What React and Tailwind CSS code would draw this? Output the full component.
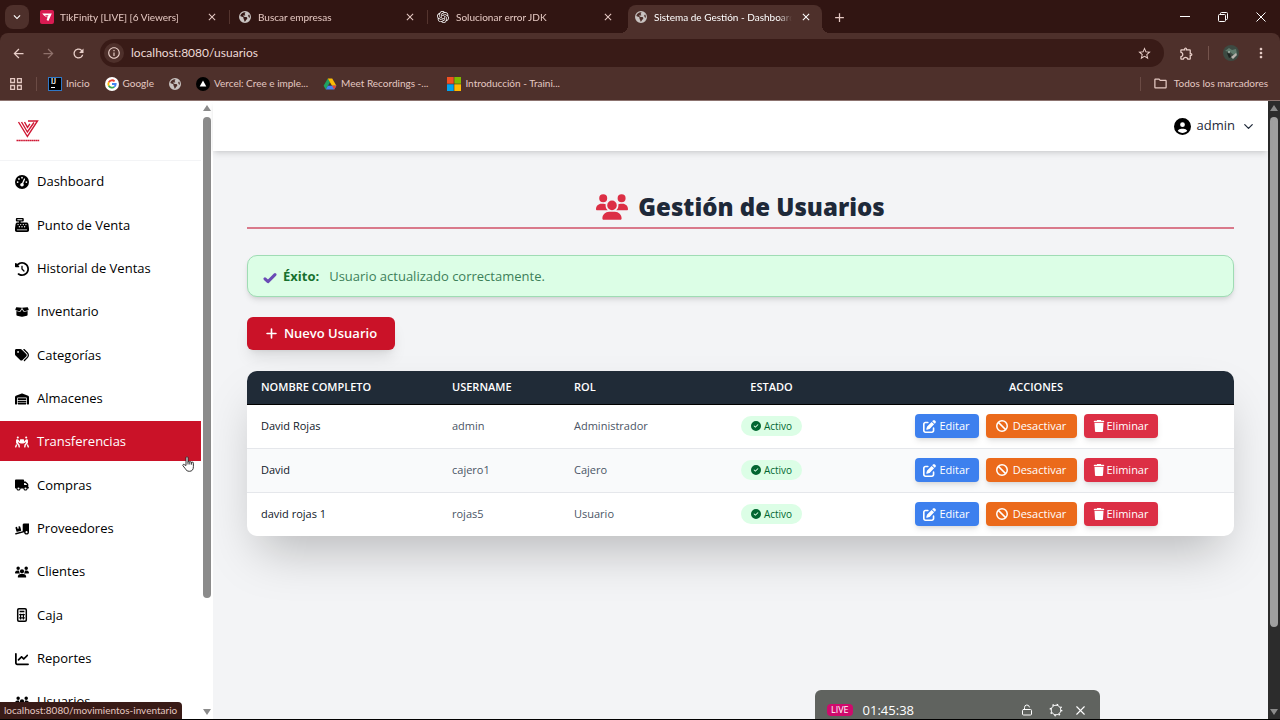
import React from 'react';
import {
    FaGaugeHigh, FaCashRegister, FaClockRotateLeft, FaBoxOpen, FaTags, FaWarehouse,
    FaPeopleCarryBox, FaTruck, FaTruckRampBox, FaUsers, FaChartLine, FaCircleUser,
    FaPenToSquare, FaBan, FaTrash, FaCircleCheck, FaPlus, FaEarthAmericas
} from 'react-icons/fa6';
import { SiOpenai } from 'react-icons/si';
import {
    MdArrowBack, MdArrowForward, MdRefresh, MdInfoOutline, MdStarBorder, MdOutlineExtension,
    MdMoreVert, MdOutlineFolder, MdClose, MdAdd, MdKeyboardArrowDown
} from 'react-icons/md';
import { ChevronDown, LockOpen, X } from 'lucide-react';

const CalculatorIcon = ({ className }) => (
    <svg viewBox="0 0 12 14" className={className} fill="none" stroke="currentColor">
        <rect x="1.7" y=".8" width="8.6" height="12.4" rx="1.2" strokeWidth="1.5" />
        <path d="M3.6 3.5h4.8" strokeWidth="1.6" />
        <path d="M3.2 6.7h5.6M3.2 9.9h5.6" strokeWidth="1.3" />
        <path d="M4.6 5.8v5.6M7.4 5.8v5.6" strokeWidth="1.2" />
    </svg>
);

const menu = [
    { label: 'Dashboard', icon: FaGaugeHigh },
    { label: 'Punto de Venta', icon: FaCashRegister },
    { label: 'Historial de Ventas', icon: FaClockRotateLeft },
    { label: 'Inventario', icon: FaBoxOpen },
    { label: 'Categorías', icon: FaTags },
    { label: 'Almacenes', icon: FaWarehouse },
    { label: 'Transferencias', icon: FaPeopleCarryBox, active: true },
    { label: 'Compras', icon: FaTruck },
    { label: 'Proveedores', icon: FaTruckRampBox },
    { label: 'Clientes', icon: FaUsers },
    { label: 'Caja', icon: CalculatorIcon },
    { label: 'Reportes', icon: FaChartLine },
    { label: 'Usuarios', icon: FaUsers },
];

const usuarios = [
    { nombre: 'David Rojas', username: 'admin', rol: 'Administrador' },
    { nombre: 'David', username: 'cajero1', rol: 'Cajero' },
    { nombre: 'david rojas 1', username: 'rojas5', rol: 'Usuario' },
];

const TikFinityIcon = () => (
    <svg viewBox="0 0 14 14" className="size-3.5 shrink-0">
        <rect width="14" height="14" rx="2" fill="#d81b52" />
        <path d="M2.2 3.6h9.6L8.4 11 6.6 10 7.6 7.4 5.4 6.6 4 5.4z" fill="#fff" />
        <path d="M5 5.2h3.6L7 7z" fill="#d81b52" />
    </svg>
);

const IdeaIcon = () => (
    <span className="flex size-3.5 flex-col border border-[#3178c6] bg-black pl-0.5 text-[7px] leading-[7px] font-bold text-white">
        IJ
        <span className="mt-0.5 h-px w-1 bg-white" />
    </span>
);

const GoogleIcon = () => (
    <svg viewBox="0 0 14 14" className="size-3.5">
        <circle cx="7" cy="7" r="7" fill="#fff" />
        <g fill="none" strokeWidth="1.8">
            <path d="M9.6 4.3A3.7 3.7 0 0 0 3.8 5.2" stroke="#ea4335" />
            <path d="M3.8 5.2a3.7 3.7 0 0 0 0 3.6" stroke="#fbbc05" />
            <path d="M3.8 8.8a3.7 3.7 0 0 0 5.5 1.1" stroke="#34a853" />
            <path d="M9.3 9.9A3.7 3.7 0 0 0 10.7 7H7" stroke="#4285f4" />
        </g>
    </svg>
);

const VercelIcon = () => (
    <svg viewBox="0 0 14 14" className="size-3.5">
        <circle cx="7" cy="7" r="7" fill="#000" />
        <path d="M7 3.6l3.3 5.8H3.7z" fill="#fff" />
    </svg>
);

const DriveIcon = () => (
    <svg viewBox="0 0 14 14" className="size-3.5">
        <path d="M4.8 1.5L.6 8.8l2.2 3.7L7 5.2z" fill="#1ea362" />
        <path d="M4.8 1.5h4.4l4.2 7.3H9z" fill="#fbbc04" />
        <path d="M4.9 8.8h8.5l-2.2 3.7H2.8z" fill="#4285f4" />
        <path d="M9 8.8h4.4l-2.2 3.7z" fill="#ea4335" />
    </svg>
);

const MicrosoftIcon = () => (
    <svg viewBox="0 0 14 14" className="size-3.5">
        <path d="M0 0h6.7v6.7H0z" fill="#f25022" />
        <path d="M7.3 0H14v6.7H7.3z" fill="#7fba00" />
        <path d="M0 7.3h6.7V14H0z" fill="#00a4ef" />
        <path d="M7.3 7.3H14V14H7.3z" fill="#ffb900" />
    </svg>
);

const GlobeIcon = () => <FaEarthAmericas className="size-3 shrink-0 text-[#c9c3c1]" />;

const tabs = [
    { title: 'TikFinity [LIVE] [6 Viewers]', icon: <TikFinityIcon /> },
    { title: 'Buscar empresas', icon: <GlobeIcon /> },
    { title: 'Solucionar error JDK', icon: <SiOpenai className="size-3 shrink-0 text-white" /> },
    { title: 'Sistema de Gestión - Dashboard', icon: <GlobeIcon />, active: true },
];

const TabStrip = () => (
    <div className="flex h-[33px] items-end bg-[#311512] pl-[5px] text-[#e6c9c3]">
        <button aria-label="Buscar pestañas" className="mb-1 flex size-6 items-center justify-center rounded-lg bg-[#4e302b]">
            <MdKeyboardArrowDown size={14} className="text-white" />
        </button>
        <div className="ml-[3px] flex h-7 min-w-0 flex-1 items-end">
            {tabs.map((tab) => (
                <div
                    key={tab.title}
                    className={tab.active
                        ? 'relative ml-0.5 flex h-7 w-[194px] items-center rounded-t-lg bg-[#4e302b] pb-1 pl-1.5 text-white before:absolute before:bottom-0 before:-left-2 before:size-2 before:bg-[radial-gradient(circle_at_0_0,transparent_8px,#4e302b_8px)] after:absolute after:-right-2 after:bottom-0 after:size-2 after:bg-[radial-gradient(circle_at_100%_0,transparent_8px,#4e302b_8px)]'
                        : 'mb-[9px] flex h-3.5 w-[198px] items-center border-r border-[#54342e] pl-2 nth-3:border-transparent'}
                >
                    <span className="flex w-3.5 justify-center">{tab.icon}</span>
                    <span className="ml-1.5 w-[138px] overflow-hidden text-[10px] whitespace-nowrap mask-r-from-90%">{tab.title}</span>
                    <button aria-label="Cerrar pestaña" className="ml-2"><MdClose size={12} /></button>
                </div>
            ))}
            <button aria-label="Nueva pestaña" className="mb-2 ml-2.5"><MdAdd size={15} /></button>
        </div>
        <div className="flex items-center gap-7 self-center pr-3.5 text-white">
            <button aria-label="Minimizar" className="h-px w-2.5 bg-white" />
            <button aria-label="Restaurar">
                <svg viewBox="0 0 10 10" className="size-2.5" fill="none" stroke="currentColor">
                    <rect x=".5" y="2.5" width="7" height="7" rx="1" />
                    <path d="M2.5 2.5v-1a1 1 0 0 1 1-1h5a1 1 0 0 1 1 1v5a1 1 0 0 1-1 1h-1" />
                </svg>
            </button>
            <button aria-label="Cerrar">
                <svg viewBox="0 0 10 10" className="size-2.5" fill="none" stroke="currentColor">
                    <path d="M.5.5l9 9M9.5.5l-9 9" />
                </svg>
            </button>
        </div>
    </div>
);

const Toolbar = () => (
    <div className="flex h-10 items-center rounded-t-lg bg-[#4e302b] px-[11px] text-[#e9cfc9]">
        <button aria-label="Atrás"><MdArrowBack size={15} /></button>
        <button aria-label="Adelante" className="ml-[15px] text-[#8f716b]"><MdArrowForward size={15} /></button>
        <button aria-label="Recargar" className="ml-[15px]"><MdRefresh size={15} /></button>
        <div className="ml-3.5 flex h-7 flex-1 items-center rounded-full bg-[#391b17] pr-3 pl-1">
            <span className="flex size-5 items-center justify-center rounded-full bg-[#4e302b]">
                <MdInfoOutline size={14} />
            </span>
            <input
                aria-label="Dirección"
                defaultValue="localhost:8080/usuarios"
                className="ml-[7px] flex-1 bg-transparent text-xs text-[#eddad6] outline-none"
            />
            <button aria-label="Añadir a marcadores"><MdStarBorder size={15} /></button>
        </div>
        <button aria-label="Extensiones" className="ml-[15px]"><MdOutlineExtension size={15} /></button>
        <span className="ml-3.5 h-3.5 w-px bg-[#75544d]" />
        <svg viewBox="0 0 16 16" className="ml-3.5 size-4">
            <circle cx="8" cy="8" r="8" fill="#3d4a42" />
            <path d="M2 6l4-3 3 2 4-1 1 5-3 1-4-3z" fill="#5f7a6c" />
            <path d="M4 8l3 1 1 3-2 1z" fill="#1d2320" />
            <path d="M8 12l5-4 1 2-4 4z" fill="#b9b3ae" />
            <circle cx="6" cy="7" r="1" fill="#a8b5ad" />
        </svg>
        <button aria-label="Menú" className="ml-3.5"><MdMoreVert size={16} /></button>
    </div>
);

const Bookmark = ({ icon, label }) => (
    <a href="#" className="flex items-center gap-1 whitespace-nowrap">{icon}{label}</a>
);

const BookmarksBar = () => (
    <div className="flex h-7 items-center border-b border-[#8d7470] bg-[#4e302b] pr-3 pb-1.5 pl-2.5 text-[10px] text-[#e4c8c2]">
        <button aria-label="Aplicaciones">
            <svg viewBox="0 0 12 12" className="size-3" fill="none" stroke="currentColor" strokeWidth="1.3">
                <path d="M.7.7h3.8v3.8H.7zM7.5.7h3.8v3.8H7.5zM.7 7.5h3.8v3.8H.7zM7.5 7.5h3.8v3.8H7.5z" />
            </svg>
        </button>
        <span className="ml-3.5 h-3.5 w-px bg-[#6b4b45]" />
        <div className="ml-[11px] flex items-center gap-[15px]">
            <Bookmark icon={<IdeaIcon />} label="Inicio" />
            <Bookmark icon={<GoogleIcon />} label="Google" />
            <Bookmark icon={<GlobeIcon />} />
            <Bookmark icon={<VercelIcon />} label="Vercel: Cree e imple..." />
            <Bookmark icon={<DriveIcon />} label="Meet Recordings -..." />
            <span className="ml-1"><Bookmark icon={<MicrosoftIcon />} label="Introducción - Traini..." /></span>
        </div>
        <span className="ml-auto h-3.5 w-px bg-[#6b4b45]" />
        <a href="#" className="ml-3 flex items-center gap-1.5"><MdOutlineFolder size={15} />Todos los marcadores</a>
    </div>
);

const ArrowUp = () => <span className="border-x-4 border-b-[6px] border-x-transparent border-b-[#8b8b8b]" />;
const ArrowDown = () => <span className="border-x-4 border-t-[6px] border-x-transparent border-t-[#8b8b8b]" />;

const Logo = () => (
    <svg viewBox="0 0 24 24" className="size-6" fill="none">
        <g stroke="#cf1834" strokeWidth="1.4">
            <path d="M2.5 3l8.9 14.5L21.5 2H12" />
            <path d="M5.5 3l5.9 10L18 3.5" />
            <path d="M8.5 3l3 5.4 2.4-3.6" />
        </g>
        <path d="M.5 21.6h23" stroke="#cf1834" strokeWidth="1.5" strokeDasharray="1.6 .3" />
    </svg>
);

const Sidebar = () => (
    <aside className="flex w-[213px] shrink-0 overflow-hidden bg-white">
        <div className="min-w-0 flex-1 overflow-hidden">
            <div className="flex h-[60px] items-center border-b border-gray-100 pl-4">
                <Logo />
            </div>
            <nav className="flex h-140 flex-col justify-between">
                {menu.map(({ label, icon: Icon, active }) => (
                    <a
                        key={label}
                        href="#"
                        className={active
                            ? 'flex h-10 items-center gap-1.5 bg-[#ca1228] pt-0.5 pl-3 text-[13px] text-white'
                            : 'flex h-10 items-center gap-1.5 pt-0.5 pl-3 text-[13px] text-black'}
                    >
                        <span className="flex w-[19px] justify-center"><Icon className="h-3.5 w-auto" /></span>
                        {label}
                    </a>
                ))}
            </nav>
        </div>
        <div className="flex w-3 flex-col items-center py-1">
            <ArrowUp />
            <div className="my-1.5 w-full flex-1 px-0.5">
                <div className="h-[82%] rounded-full bg-[#8b8b8b]" />
            </div>
            <ArrowDown />
        </div>
    </aside>
);

const Topbar = () => (
    <header className="z-10 flex h-[50px] shrink-0 items-center justify-end bg-white pr-3 shadow-md">
        <button className="flex items-center gap-1.5 text-[13px] text-gray-800">
            <FaCircleUser size={17} className="text-black" />
            admin
            <ChevronDown size={15} />
        </button>
    </header>
);

const UsersTable = () => (
    <div className="mt-[21px] overflow-hidden rounded-[10px] bg-white shadow-2xl">
        <table className="w-full table-fixed text-left text-[11px]">
            <thead className="border-b border-black bg-[#202b37] text-white uppercase">
                <tr className="h-[33px]">
                    <th className="w-[191px] px-3.5 font-semibold">Nombre completo</th>
                    <th className="w-[122px] px-3.5 font-semibold">Username</th>
                    <th className="w-[145px] px-3.5 font-semibold">Rol</th>
                    <th className="w-[133px] text-center font-semibold">Estado</th>
                    <th className="text-center font-semibold">Acciones</th>
                </tr>
            </thead>
            <tbody>
                {usuarios.map((u) => (
                    <tr key={u.username} className="h-11 border-b border-gray-200 last:border-0 even:bg-gray-50">
                        <td className="px-3.5 font-medium text-gray-900">{u.nombre}</td>
                        <td className="px-3.5 text-gray-600">{u.username}</td>
                        <td className="px-3.5 text-gray-600">{u.rol}</td>
                        <td className="text-center">
                            <span className="inline-flex h-5 items-center gap-[3px] rounded-full bg-[#dcfee6] px-2.5 text-[10px] font-medium text-green-800">
                                <FaCircleCheck size={10} />
                                Activo
                            </span>
                        </td>
                        <td>
                            <div className="flex justify-center gap-[7px] text-white">
                                <button className="flex h-6 w-16 items-center justify-center gap-[3px] rounded bg-[#3d80ee] shadow-md">
                                    <FaPenToSquare size={13} />Editar
                                </button>
                                <button className="flex h-6 w-[91px] items-center justify-center gap-[5px] rounded bg-[#eb6a1b] shadow-md">
                                    <FaBan size={12} />Desactivar
                                </button>
                                <button className="flex h-6 w-[74px] items-center justify-center gap-0.5 rounded bg-[#dc2f45] shadow-md">
                                    <FaTrash size={12} />Eliminar
                                </button>
                            </div>
                        </td>
                    </tr>
                ))}
            </tbody>
        </table>
    </div>
);

const UsersPage = () => (
    <main className="flex-1 overflow-hidden bg-gray-100 px-[34px] pt-[38px]">
        <h1 className="flex h-10 items-center justify-center gap-2.5 border-b-2 border-[#d9798b] pb-0.5 text-2xl font-extrabold text-gray-800">
            <FaUsers size={32} className="text-[#dc2f45]" />
            Gestión de Usuarios
        </h1>
        <div role="alert" className="mt-[26px] flex h-[42px] items-center rounded-[10px] border border-[#9fdcb4] bg-[#dcfee6] px-[15px] pt-0.5 text-[13px] text-green-800 shadow-md">
            <svg viewBox="0 0 14 12" className="mt-0.5 size-3.5" fill="none" stroke="#6a4bb5" strokeWidth="3" strokeLinecap="round" strokeLinejoin="round">
                <path d="M2 6.8l3 2.8 7-7" />
            </svg>
            <strong className="ml-1.5 font-bold text-[#17712f]">Éxito:</strong>
            <span className="ml-2.5 text-[#3d8059]">Usuario actualizado correctamente.</span>
        </div>
        <button className="mt-5 flex h-[33px] w-[148px] items-center justify-center gap-1.5 rounded-md bg-[#ca1228] text-[13px] font-semibold text-white shadow-lg">
            <FaPlus size={13} />
            Nuevo Usuario
        </button>
        <UsersTable />
    </main>
);

// Barra flotante de la grabación en directo
const LiveBar = () => (
    <div className="absolute bottom-0 left-[815px] flex h-[29px] w-[285px] items-center rounded-t-md bg-[#60635f] px-3 pt-[11px] text-white">
        <span className="rounded-sm bg-[#cf0a6c] px-1 text-[9px] leading-3 font-medium">LIVE</span>
        <span className="ml-2.5 text-[13px] leading-4">01:45:38</span>
        <button aria-label="Desbloquear" className="ml-auto"><LockOpen size={12} /></button>
        <button aria-label="Ajustes" className="ml-4">
            <svg viewBox="0 0 14 14" className="size-3.5" fill="none" stroke="currentColor">
                <circle cx="7" cy="7" r="4.8" />
                <circle cx="7" cy="7" r="5.7" strokeWidth="1.4" strokeDasharray="1.5 2.98" />
            </svg>
        </button>
        <button aria-label="Cerrar" className="ml-2.5"><X size={15} strokeWidth={1.8} /></button>
    </div>
);

const HandCursor = () => (
    <svg viewBox="0 0 12 16" className="absolute top-[456px] left-[182px] h-4 w-3" fill="#fff" stroke="#222" strokeWidth=".9" strokeLinejoin="round">
        <path d="M4 9.5V1.8a1 1 0 0 1 2 0v4.4a.9.9 0 0 1 1.8.2.9.9 0 0 1 1.8.4.9.9 0 0 1 1.8.6v3.3c0 3-1.4 4.6-4 4.6-2.2 0-3.2-1-4.1-2.6L.9 9.7c-.5-1 .7-1.8 1.5-1z" />
        <path d="M6 6v2.5M7.8 6.4v2.1M9.6 6.8v1.9" />
    </svg>
);

const App = () => {
    return (
        <div className="relative flex h-screen flex-col overflow-hidden border-b border-black bg-[#311512] font-['Open_Sans','Noto_Sans',sans-serif]">
            <div className="font-['Lato','Open_Sans',sans-serif]">
                <TabStrip />
                <Toolbar />
                <BookmarksBar />
            </div>
            <div className="flex min-h-0 flex-1">
                <Sidebar />
                <div className="flex min-w-0 flex-1 flex-col">
                    <Topbar />
                    <UsersPage />
                </div>
                <div className="flex w-3 shrink-0 flex-col items-center bg-[#2c2c2c] py-1">
                    <ArrowUp />
                    <div className="my-1.5 w-full flex-1 px-0.5">
                        <div className="h-[87%] rounded-full bg-[#9f9f9f]" />
                    </div>
                    <ArrowDown />
                </div>
            </div>
            <div className="absolute bottom-0 left-0 h-[17px] w-[182px] rounded-tr bg-[#391b17] pl-1 font-['Lato','Open_Sans',sans-serif] text-[10px] leading-4 whitespace-nowrap text-[#e4c8c2]">
                localhost:8080/movimientos-inventario
            </div>
            <LiveBar />
            <HandCursor />
        </div>
    );
};

export default App;
